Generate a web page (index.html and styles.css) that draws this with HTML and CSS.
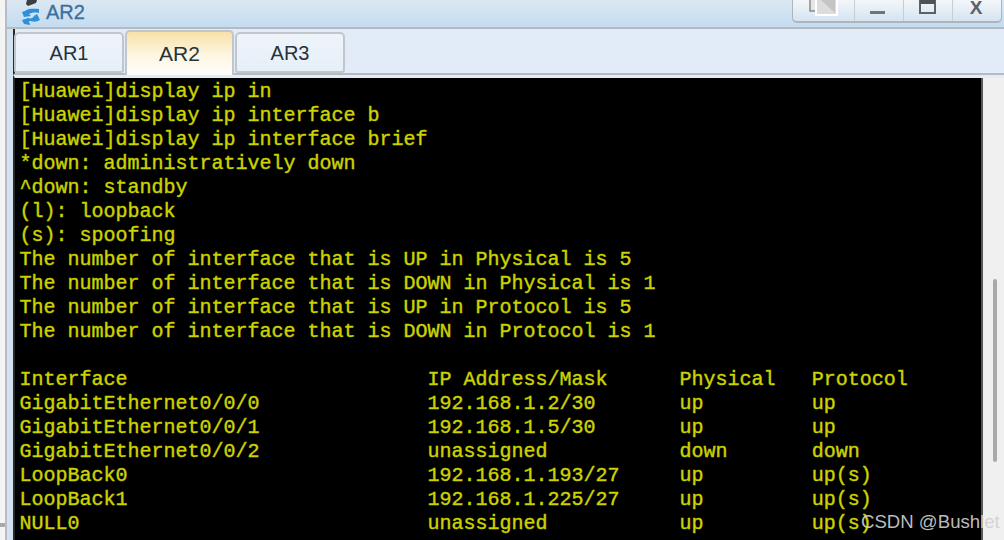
FILE: index.html
```html
<!DOCTYPE html>
<html lang="en">
<head>
<meta charset="utf-8">
<title>AR2</title>
<link rel="stylesheet" href="styles.css">
</head>
<body>
<div class="window">
  <header class="titlebar">
    <div class="title">
      <svg class="logo" width="24" height="27" viewBox="0 0 24 27">
        <path d="M8 0 L18 0 L17 3 L9 6 L7 4 Z" fill="#3a3f44"/>
        <path d="M6 11 C10 8 14 9 20 9 L20 13 C15 12 12 13 10 14 L12 16 L5 17 L3 12 Z" fill="#2f8fd8"/>
        <path d="M18 14 L21 20 C16 23 13 21 10 21 L11 25 L5 24 L3 20 L9 18 C12 19 14 18 15 16 Z" fill="#2f8fd8"/>
      </svg>
      <span class="title-text">AR2</span>
    </div>
    <div class="winbtns">
      <div class="winbtn restore">
        <svg width="32" height="22" viewBox="0 0 32 22">
          <rect x="2" y="-6" width="22" height="19" fill="#e6e6e6" stroke="#8a8a8a" stroke-width="1.5"/>
          <rect x="8" y="-3" width="21" height="20" fill="#dcdcdc" stroke="#fff" stroke-width="2"/>
          <path d="M11 0 L27 0 L27 15 Z" fill="#c4c4c4"/>
        </svg>
      </div>
      <div class="winbtn">
        <svg width="16" height="6" viewBox="0 0 16 6" class="min"><rect y="1" width="15" height="3" fill="#6d747a"/></svg>
      </div>
      <div class="winbtn">
        <svg width="17" height="15" viewBox="0 0 17 15" class="max"><rect x="1" y="1" width="15" height="13" fill="none" stroke="#5c6368" stroke-width="2"/><rect x="1" y="0" width="15" height="5" fill="#4d5358"/></svg>
      </div>
      <div class="winbtn close">X</div>
    </div>
  </header>
  <div class="body">
    <nav class="tabbar">
      <div class="tab">AR1</div>
      <div class="tab active">AR2</div>
      <div class="tab">AR3</div>
    </nav>
    <main class="content">
      <pre class="terminal">[Huawei]display ip in
[Huawei]display ip interface b
[Huawei]display ip interface brief
*down: administratively down
^down: standby
(l): loopback
(s): spoofing
The number of interface that is UP in Physical is 5
The number of interface that is DOWN in Physical is 1
The number of interface that is UP in Protocol is 5
The number of interface that is DOWN in Protocol is 1

Interface                         IP Address/Mask      Physical   Protocol
GigabitEthernet0/0/0              192.168.1.2/30       up         up
GigabitEthernet0/0/1              192.168.1.5/30       up         up
GigabitEthernet0/0/2              unassigned           down       down
LoopBack0                         192.168.1.193/27     up         up(s)
LoopBack1                         192.168.1.225/27     up         up(s)
NULL0                             unassigned           up         up(s)</pre>
      <div class="scrolltrack"><div class="scrollthumb"></div></div>
    </main>
  </div>
</div>
<div class="edge-band"></div>
<div class="watermark">CSDN @Bushlet</div>
</body>
</html>
```
FILE: styles.css
```css
* { box-sizing: border-box; }
html, body {
  margin: 0;
  height: 540px;
  overflow: hidden;
  background: #f4f4f4;
}
body { position: relative; padding-left: 5px; }
.window {
  height: 540px;
  display: flex;
  flex-direction: column;
  border-left: 2px solid #b7bdc4;
  background: #d3e2f1;
}
.titlebar {
  height: 29px;
  flex: none;
  display: flex;
  justify-content: space-between;
  background: linear-gradient(#dbe7f2, #c4dcf0);
  border-bottom: 2px solid #b4bcc2;
  padding-left: 12px;
  padding-right: 2px;
}
.title { display: flex; align-items: flex-start; gap: 3px; height: 27px; }
.logo { display: block; flex: none; }
.title-text {
  font: 20px/24px "Liberation Sans", Arial, sans-serif;
  color: #3b6f9e;
  -webkit-text-stroke: 0.3px #3b6f9e;
}
.winbtns {
  display: flex;
  height: 23px;
  border-style: solid;
  border-color: #aeb4b8;
  border-width: 0 1px 2px 1px;
  border-radius: 0 0 5px 5px;
  background: linear-gradient(#f3f6f9, #d4e4f2);
}
.winbtn {
  width: 49px;
  display: flex;
  align-items: center;
  justify-content: center;
  border-left: 1px solid #c6ced4;
  overflow: hidden;
}
.winbtn.restore { width: 61px; border-left: 0; padding-bottom: 4px; }
.winbtn .min { margin-top: 5px; margin-left: -2px; }
.winbtn .max { margin-top: -9px; margin-left: -2px; }
.winbtn.close {
  font: 700 19px/16px "Liberation Sans", Arial, sans-serif;
  color: #5b6267;
  align-items: flex-start;
  padding-right: 2px;
}
.body {
  flex: 1;
  min-height: 0;
  display: flex;
  flex-direction: column;
  padding-left: 6px;
}
.tabbar {
  height: 46px;
  flex: none;
  display: flex;
  align-items: flex-end;
  background: #e1ecf8;
  border-left: 2px solid #2a2a2a;
  border-bottom: 2px solid #b4bcc2;
}
.tab {
  width: 110px;
  height: 41px;
  margin-right: 1px;
  border: 2px solid #c0c6cb;
  border-radius: 5px 5px 3px 3px;
  background: linear-gradient(#eef4fa, #e6eff8);
  font: 20px/38px "Liberation Sans", Arial, sans-serif;
  color: #26323c;
  text-align: center;
}
.tab:first-child { margin-left: -1px; }
.tab.active {
  width: 109px;
  height: 45px;
  background: linear-gradient(#f8e2a8, #fdf6e2 55%, #fdfdfb);
  border-bottom: 0;
  border-radius: 5px 5px 0 0;
  font-size: 21px;
  line-height: 44px;
  margin-bottom: -2px;
  position: relative;
}
.content {
  flex: 1;
  min-height: 0;
  display: flex;
  border-top: 3px solid #e1ecf8;
  border-left: 2px solid #2a2a2a;
}
.terminal {
  flex: none;
  width: 966px;
  margin: 0;
  padding: 2px 0 0 4.5px;
  background: #000;
  color: #d6d600;
  font: 20px/24px "Liberation Mono", "Courier New", monospace;
  -webkit-text-stroke: 0.45px #b8c800;
  overflow: hidden;
  white-space: pre;
}
.scrolltrack {
  flex: 1;
  background: #f0f0f0;
  border-left: 2px solid #55595c;
  padding: 201px 0 0 10px;
}
.scrollthumb {
  width: 4px;
  height: 183px;
  background: #a9a9a9;
  border-radius: 2px;
}
.edge-band {
  position: absolute;
  left: 0;
  top: 523px;
  width: 5px;
  height: 4px;
  background: #a8a8a8;
}
.watermark {
  position: absolute;
  left: 861px;
  top: 510px;
  font: 18.6px/24px "Liberation Sans", Arial, sans-serif;
  color: rgba(208, 208, 208, 0.92);
}
```
